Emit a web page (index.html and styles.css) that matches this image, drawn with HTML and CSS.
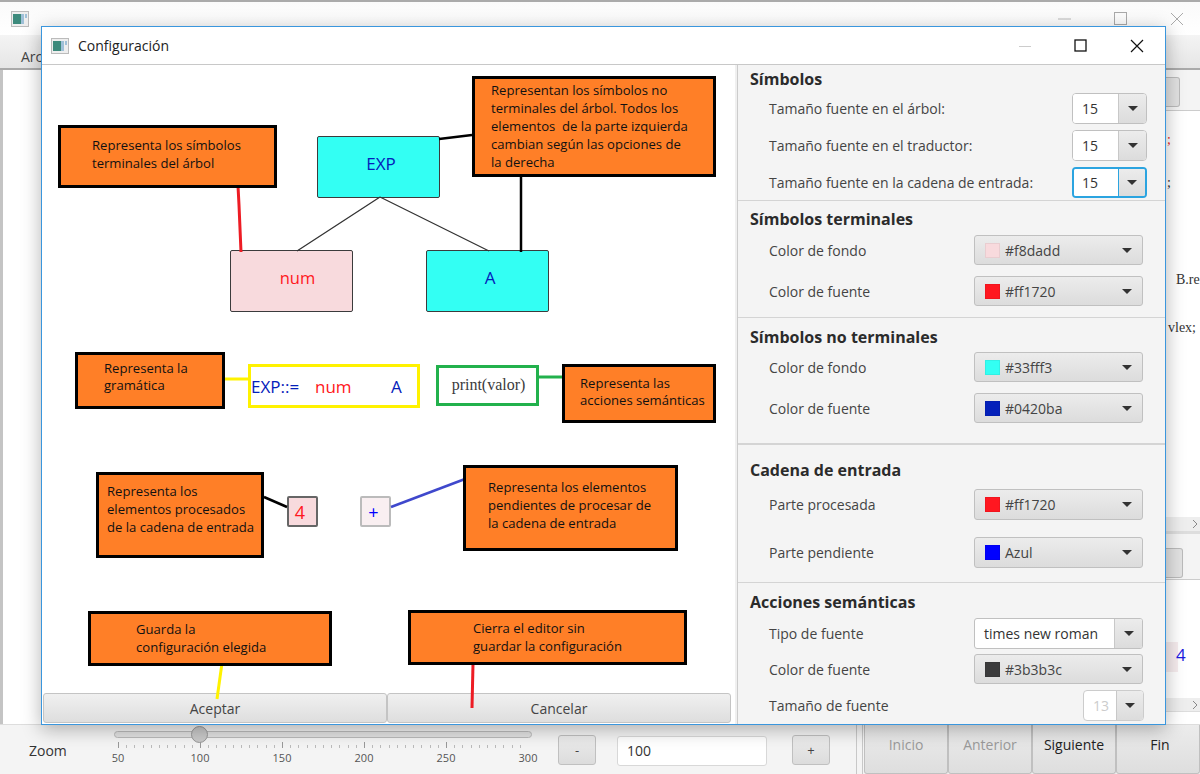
FILE: index.html
```html
<!DOCTYPE html>
<html lang="es">
<head>
<meta charset="utf-8">
<title>Configuración</title>
<link rel="stylesheet" href="styles.css">
</head>
<body>
<div class="back">
  <div class="back-title">
    <svg class="win-icon" viewBox="0 0 18 16"><rect x=".5" y=".5" width="17" height="15" fill="#eee" stroke="#bbb"/><rect x="2" y="3" width="8" height="10" fill="#3d8a7c"/><rect x="10" y="3" width="3" height="10" fill="#9fc0d8"/><rect x="14" y="3" width="2" height="4" fill="#9fc0d8"/></svg>
    <div class="back-controls">
      <svg class="bc bc-min" viewBox="0 0 14 14"><path d="M0 7h13" stroke="#bbb" fill="none"/></svg>
      <svg class="bc bc-max" viewBox="0 0 14 14"><rect x=".5" y=".5" width="12" height="12" stroke="#aaa" fill="none"/></svg>
      <svg class="bc bc-close" viewBox="0 0 14 14"><path d="M1 1l12 12M13 1L1 13" stroke="#aaa" fill="none"/></svg>
    </div>
  </div>
  <div class="back-menu"><span class="menu-item">Archivo</span></div>
  <div class="back-main">
    <div class="back-side">
      <div class="bs-tool"><span class="bs-btn"></span></div>
      <div class="bs-code">
        <span class="code-l code-1">;</span>
        <span class="code-l code-2">;</span>
        <span class="code-l code-3">B.re</span>
        <span class="code-l code-4">vlex;</span>
      </div>
      <div class="bs-scroll"><svg class="chev" viewBox="0 0 6 10"><path d="M1 1l4 4-4 4" stroke="#888" fill="none"/></svg></div>
      <div class="bs-tool2"><span class="bs-btn2"></span></div>
      <div class="bs-area"><span class="bs-pink"></span><span class="bs-four">4</span></div>
      <div class="bs-scroll bs-scroll2"><svg class="chev" viewBox="0 0 6 10"><path d="M1 1l4 4-4 4" stroke="#888" fill="none"/></svg></div>
    </div>
  </div>
  <div class="back-bottom">
    <span class="zoom-label">Zoom</span>
    <div class="slider">
      <div class="track"><span class="thumb"></span></div>
      <div class="ticks"></div>
      <div class="tick-labels"><span>50</span><span>100</span><span>150</span><span>200</span><span>250</span><span>300</span></div>
    </div>
    <button class="step step-minus">-</button>
    <div class="zoom-input">100</div>
    <button class="step step-plus">+</button>
    <div class="seps"></div>
    <div class="nav">
      <button class="nav-btn off">Inicio</button>
      <button class="nav-btn off">Anterior</button>
      <button class="nav-btn">Siguiente</button>
      <button class="nav-btn nav-last">Fin</button>
    </div>
  </div>
</div>

<div class="dialog">
  <div class="dlg-title">
    <svg class="win-icon dlg-icon" viewBox="0 0 18 16"><rect x=".5" y=".5" width="17" height="15" fill="#eee" stroke="#bbb"/><rect x="2" y="3" width="8" height="10" fill="#3d8a7c"/><rect x="10" y="3" width="3" height="10" fill="#9fc0d8"/><rect x="14" y="3" width="2" height="4" fill="#9fc0d8"/></svg>
    <span class="dlg-name">Configuración</span>
    <div class="dlg-controls">
      <svg class="dc dc-min" viewBox="0 0 14 14"><path d="M1 7.5h12" stroke="#ccc" fill="none"/></svg>
      <svg class="dc dc-max" viewBox="0 0 14 14"><rect x="1" y="1" width="11" height="11" stroke="#111" stroke-width="1.3" fill="none"/></svg>
      <svg class="dc dc-close" viewBox="0 0 14 14"><path d="M1 1l12 12M13 1L1 13" stroke="#111" stroke-width="1.2" fill="none"/></svg>
    </div>
  </div>
  <div class="dlg-body">
    <div class="canvas">
      <svg class="wires" viewBox="42 65 693 660">
        <path d="M380 197L297 251M380 197L489 251" stroke="#333" stroke-width="1.3" fill="none"/>
        <path d="M238 186L239 205L241 252" stroke="#ed1c24" stroke-width="3" fill="none"/>
        <path d="M439 139L472 135" stroke="#000" stroke-width="2.5" fill="none"/>
        <path d="M521 177V252" stroke="#000" stroke-width="2.5" fill="none"/>
        <path d="M225 379H248" stroke="#fff200" stroke-width="3" fill="none"/>
        <path d="M539 377H563" stroke="#22b14c" stroke-width="3" fill="none"/>
        <path d="M264 497L287 507" stroke="#000" stroke-width="2.5" fill="none"/>
        <path d="M391 507L465 479" stroke="#3f48cc" stroke-width="2.5" fill="none"/>
        <path d="M222 663L217 699" stroke="#fff200" stroke-width="3" fill="none"/>
        <path d="M473 664L472 708" stroke="#ed1c24" stroke-width="3" fill="none"/>
      </svg>

      <div class="callout c1">Representa los símbolos<br>terminales del árbol</div>
      <div class="callout c2">Representan los símbolos no<br>terminales del árbol. Todos los<br>elementos  de la parte izquierda<br>cambian según las opciones de<br>la derecha</div>
      <div class="callout c3">Representa la<br>gramática</div>
      <div class="callout c4">Representa las<br>acciones semánticas</div>
      <div class="callout c5">Representa los<br>elementos procesados<br>de la cadena de entrada</div>
      <div class="callout c6">Representa los elementos<br>pendientes de procesar de<br>la cadena de entrada</div>
      <div class="callout c7">Guarda la<br>configuración elegida</div>
      <div class="callout c8">Cierra el editor sin<br>guardar la configuración</div>

      <div class="node n-exp">EXP</div>
      <div class="node n-num">num</div>
      <div class="node n-a">A</div>

      <div class="grammar"><span class="g-exp">EXP::=</span><span class="g-num">num</span><span class="g-a">A</span></div>
      <div class="action">print(valor)</div>

      <div class="cell cell-done">4</div>
      <div class="cell cell-todo">+</div>

      <div class="canvas-btns">
        <button class="wide-btn">Aceptar</button>
        <button class="wide-btn">Cancelar</button>
      </div>
    </div>

    <div class="panel">
      <section class="sec sec1">
        <h2>Símbolos</h2>
        <div class="row r-spin"><span class="lbl">Tamaño fuente en el árbol:</span><div class="spin"><span class="spin-val">15</span><span class="spin-arrow"><i class="arrow"></i></span></div></div>
        <div class="row r-spin"><span class="lbl">Tamaño fuente en el traductor:</span><div class="spin"><span class="spin-val">15</span><span class="spin-arrow"><i class="arrow"></i></span></div></div>
        <div class="row r-spin"><span class="lbl">Tamaño fuente en la cadena de entrada:</span><div class="spin focus"><span class="spin-val">15</span><span class="spin-arrow"><i class="arrow"></i></span></div></div>
      </section>
      <section class="sec sec2">
        <h2>Símbolos terminales</h2>
        <div class="row"><span class="lbl">Color de fondo</span><div class="pick"><i class="sw sw-f8"></i><span>#f8dadd</span><i class="arrow"></i></div></div>
        <div class="row gap-11"><span class="lbl">Color de fuente</span><div class="pick"><i class="sw sw-red"></i><span>#ff1720</span><i class="arrow"></i></div></div>
      </section>
      <section class="sec sec3">
        <h2>Símbolos no terminales</h2>
        <div class="row"><span class="lbl">Color de fondo</span><div class="pick"><i class="sw sw-cy"></i><span>#33fff3</span><i class="arrow"></i></div></div>
        <div class="row gap-11"><span class="lbl">Color de fuente</span><div class="pick"><i class="sw sw-nv"></i><span>#0420ba</span><i class="arrow"></i></div></div>
      </section>
      <section class="sec sec4">
        <h2>Cadena de entrada</h2>
        <div class="row"><span class="lbl">Parte procesada</span><div class="pick tall"><i class="sw sw-red"></i><span>#ff1720</span><i class="arrow"></i></div></div>
        <div class="row gap-17"><span class="lbl">Parte pendiente</span><div class="pick tall"><i class="sw sw-bl"></i><span>Azul</span><i class="arrow"></i></div></div>
      </section>
      <section class="sec sec5">
        <h2>Acciones semánticas</h2>
        <div class="row"><span class="lbl">Tipo de fuente</span><div class="combo"><span class="combo-val">times new roman</span><span class="combo-arrow"><i class="arrow"></i></span></div></div>
        <div class="row"><span class="lbl">Color de fuente</span><div class="pick"><i class="sw sw-dk"></i><span>#3b3b3c</span><i class="arrow"></i></div></div>
        <div class="row"><span class="lbl">Tamaño de fuente</span><div class="spin-sm"><span class="spin-sm-val">13</span><span class="spin-arrow"><i class="arrow"></i></span></div></div>
      </section>
    </div>
  </div>
</div>
</body>
</html>
```

FILE: styles.css
```css
* { box-sizing: border-box; }
html, body { margin: 0; padding: 0; }
body {
  position: relative;
  width: 1200px;
  height: 774px;
  overflow: hidden;
  background: #fff;
  font-family: "Open Sans", "Liberation Sans", sans-serif;
  font-size: 14px;
  color: #3c3c3c;
}
button { font-family: inherit; font-size: 14px; color: #444; }

/* Window behind */
.back { width: 1200px; height: 774px; display: flex; flex-direction: column; border-top: 2px solid #aaa; }
.back-title {
  height: 33px; flex: none; display: flex; align-items: center; padding-left: 11px;
  background: linear-gradient(#fafafa, #fff);
}
.win-icon { width: 18px; height: 16px; flex: none; }
.back-controls { margin-left: auto; display: flex; align-items: center; }
.bc { width: 14px; height: 14px; display: block; }
.bc-min { margin-right: 42px; }
.bc-max { margin-right: 42px; }
.bc-close { margin-right: 16px; }
.back-menu {
  height: 35px; flex: none; padding: 12px 0 0 21px; overflow: hidden;
  background: linear-gradient(#f4f4f4, #e6e6e6);
  border-bottom: 2px solid #aaa;
}
.menu-item { font-size: 14px; color: #444; }
.back-main { flex: 1; min-height: 0; display: flex; justify-content: flex-end; border-left: 3px solid #c4c4c4; background: #fff; }
.back-side { width: 34px; display: flex; flex-direction: column; }
.bs-tool { height: 41px; flex: none; padding-top: 7px; border-bottom: 1px solid #ccc; background: #f4f4f4; }
.bs-btn { display: block; width: 14px; height: 30px; background: #e2e2e2; border: 1px solid #bbb; border-left: 0; border-radius: 0 3px 3px 0; }
.bs-code { height: 406px; flex: none; position: relative; font-family: "Liberation Serif", serif; font-size: 14px; color: #333; }
.code-l { position: absolute; line-height: 18px; }
.code-1 { left: 1px; top: 20px; color: #ed1c24; }
.code-2 { left: 1px; top: 63px; }
.code-3 { left: 10px; top: 160px; }
.code-4 { left: 2px; top: 208px; }
.bs-scroll { height: 15px; flex: none; background: #eee; display: flex; justify-content: flex-end; align-items: center; padding-right: 2px; border-bottom: 1px solid #ddd; }
.chev { width: 6px; height: 10px; }
.bs-tool2 { height: 48px; flex: none; padding-top: 14px; background: #f4f4f4; border-top: 2px solid #ddd; border-bottom: 1px solid #ccc; }
.bs-btn2 { display: block; width: 17px; height: 30px; background: #e2e2e2; border: 1px solid #bbb; border-left: 0; border-radius: 0 3px 3px 0; }
.bs-area { height: 118px; flex: none; position: relative; }
.bs-pink { position: absolute; left: 0; top: 62px; width: 12px; height: 30px; background: #f6ecee; }
.bs-four { position: absolute; left: 10px; top: 60px; width: 12px; font-size: 17px; line-height: 30px; color: #1a1ae0; }
.bs-scroll2 { height: 14px; }

.back-bottom {
  height: 50px; flex: none; display: flex; align-items: flex-start; position: relative;
  background: #f4f4f4; border-top: 1px solid #ddd;
}
.zoom-label { width: 74px; margin-left: 29px; padding-top: 16px; font-size: 14px; color: #333; }
.slider { width: 440px; padding-top: 6px; }
.track { position: relative; height: 7px; margin: 0 11px; background: #e2e2e2; border: 1px solid #bbb; border-radius: 4px; }
.thumb { position: absolute; left: 76px; top: -6px; width: 17px; height: 17px; border-radius: 50%; background: #c9c9c9; border: 1px solid #999; }
.ticks {
  height: 6px; margin: 4px 15px 0;
  background:
    repeating-linear-gradient(90deg, #999 0 1px, transparent 1px 82px),
    repeating-linear-gradient(90deg, #bbb 0 1px, transparent 1px 8.2px) 0 3px / 100% 3px no-repeat;
}
.tick-labels { display: flex; justify-content: space-between; margin-top: 3px; font-size: 11px; line-height: 14px; color: #555; }
.tick-labels span { width: 30px; text-align: center; }
.step {
  width: 38px; height: 30px; margin-top: 10px; padding: 0; flex: none;
  background: linear-gradient(#ececec, #dcdcdc); border: 1px solid #c0c0c0; border-radius: 3px; font-size: 13px;
}
.step-minus { margin-left: 15px; }
.step-plus { margin-left: 25px; }
.zoom-input {
  width: 150px; height: 30px; margin: 11px 0 0 21px; padding: 0 9px; flex: none; line-height: 28px;
  background: #fff; border: 1px solid #d8d8d8; border-radius: 3px; font-size: 14px; color: #333;
}
.seps { width: 7px; height: 50px; margin-left: 26px; flex: none; border-left: 1px solid #c8c8c8; border-right: 1px solid #c8c8c8; }
.nav { display: flex; margin-left: 1px; }
.nav-btn {
  width: 84px; height: 49px; padding: 0 0 10px; background: linear-gradient(#ececec, #dedede);
  border: 1px solid #c0c0c0; border-top: 0; border-radius: 0 0 3px 3px; color: #222;
}
.nav-btn.off { color: #9a9a9a; }
.nav-last { padding-left: 4px; }

/* Dialog */
.dialog {
  position: absolute; left: 41px; top: 26px; width: 1125px; height: 699px;
  display: flex; flex-direction: column;
  border: 1px solid #3a96dd; background: #fff;
  box-shadow: 0 4px 18px rgba(0,0,0,.3);
}
.dlg-title { height: 38px; flex: none; display: flex; align-items: center; padding-left: 9px; border-bottom: 1px solid #c8c8c8; background: #fff; }
.dlg-name { margin-left: 9px; font-size: 14px; color: #222; }
.dlg-controls { margin-left: auto; display: flex; align-items: center; }
.dc { width: 14px; height: 14px; display: block; }
.dc-min { margin-right: 42px; }
.dc-max { margin-right: 42px; }
.dc-close { margin-right: 21px; }
.dlg-body { flex: 1; min-height: 0; display: flex; }

.canvas {
  position: relative; width: 693px; flex: none;
  display: flex; flex-direction: column; justify-content: flex-end;
  padding: 0 4px 1px 1px; background: #fff;
}
.wires { position: absolute; left: 0; top: 0; width: 693px; height: 660px; z-index: 2; pointer-events: none; }
.canvas-btns { display: flex; position: relative; z-index: 1; }
.wide-btn {
  flex: 1; height: 30px; padding: 0;
  background: linear-gradient(#f0f0f0, #dedede); border: 1px solid #c4c4c4; border-radius: 3px;
}

.callout {
  position: absolute; border: 3px solid #000; background: #ff7f27; color: #111;
  font-size: 13.1px; line-height: 18px; white-space: pre; z-index: 3;
}
.c1 { left: 16px; top: 60px; width: 219px; height: 63px; padding: 8px 0 0 31px; }
.c2 { left: 430px; top: 11px; width: 244px; height: 101px; padding: 2px 0 0 16px; }
.c3 { left: 33px; top: 287px; width: 150px; height: 57px; padding: 5px 0 0 26px; line-height: 17px; }
.c4 { left: 520px; top: 299px; width: 154px; height: 59px; padding: 8px 0 0 15px; line-height: 17px; }
.c5 { left: 54px; top: 407px; width: 168px; height: 86px; padding: 7px 0 0 8px; }
.c6 { left: 421px; top: 400px; width: 215px; height: 86px; padding: 10px 0 0 22px; }
.c7 { left: 46px; top: 546px; width: 244px; height: 55px; padding: 6px 0 0 45px; }
.c8 { left: 366px; top: 545px; width: 279px; height: 55px; padding: 6px 0 0 62px; }

.node {
  position: absolute; width: 123px; height: 62px; border: 1.5px solid #3b3b3c; border-radius: 2px;
  font-size: 16px; display: flex; align-items: center; justify-content: center; padding-bottom: 8px;
}
.n-exp { left: 275px; top: 71px; background: #33fff3; color: #0420ba; font-size: 17px; padding-left: 5px; }
.n-num { left: 188px; top: 185px; background: #f8dadd; color: #ff1720; padding-left: 12px; font-size: 16.5px; }
.n-a { left: 384px; top: 185px; background: #33fff3; color: #0420ba; padding-left: 5px; font-size: 17px; }

.grammar {
  position: absolute; left: 206px; top: 299px; width: 172px; height: 44px;
  border: 3px solid #fff200; display: flex; align-items: center; font-size: 17px; background: #fff; z-index: 1;
}
.g-exp { color: #0420ba; width: 64px; }
.g-num { color: #ff1720; width: 76px; }
.g-a { color: #0420ba; }
.action {
  position: absolute; left: 394px; top: 300px; width: 103px; height: 41px; padding: 0 0 2px 2px;
  border: 3px solid #22b14c; display: flex; align-items: center; justify-content: center;
  font-family: "Liberation Serif", serif; font-size: 16px; color: #3b3b3c; background: #fff;
}
.cell {
  position: absolute; top: 431px; width: 31px; height: 31px; border-radius: 2px;
  display: flex; align-items: center; justify-content: center;
}
.cell-done { left: 245px; background: #f8dadd; border: 2px solid #666; color: #ff1720; font-size: 18px; padding-right: 5px; }
.cell-todo { left: 318px; background: #f9eff1; border: 2px solid #bbb; color: #0000ff; font-size: 18px; padding-right: 4px; }

/* Panel */
.panel {
  flex: 1; min-width: 0; background: #f4f4f4;
  border-left: 1px solid #ccc; margin-left: 2px; box-shadow: -3px 0 0 #f0f0f0;
  overflow: hidden;
}
.sec { display: flex; flex-direction: column; border-bottom: 1px solid #d4d4d4; }
.sec5 { border-bottom: 0; }
.sec h2 { margin: 0 0 0 12px; height: 20px; font-size: 16px; line-height: 20px; font-weight: 700; color: #2b2b2b; }
.sec1 { height: 136px; padding-top: 4px; }
.sec2 { height: 117px; padding-top: 8px; }
.sec3 { height: 127px; padding-top: 9px; border-bottom-width: 2px; }
.sec4 { height: 138px; padding-top: 15px; }
.sec5 { padding-top: 9px; }
.sec h2 + .row { margin-top: 6px; }
.sec1 h2 + .row { margin-top: 4px; }
.sec3 h2 + .row { margin-top: 5px; }
.sec4 h2 + .row { margin-top: 9px; }
.row { display: flex; align-items: center; justify-content: space-between; margin-top: 5px; padding: 0 22px 0 31px; }
.r-spin { margin-top: 6px; padding-right: 18px; }
.sec .gap-11 { margin-top: 11px; }
.sec .gap-17 { margin-top: 17px; }
.lbl { font-size: 14px; color: #444; white-space: nowrap; }

.spin { width: 75px; height: 31px; display: flex; border: 1px solid #c0c0c0; border-radius: 4px; background: #fff; overflow: hidden; }
.spin-val { width: 45px; padding-left: 9px; line-height: 29px; background: #fff; color: #333; }
.spin-arrow { flex: 1; display: flex; align-items: center; justify-content: center; background: linear-gradient(#ececec, #dcdcdc); border-left: 1px solid #c8c8c8; }
.spin.focus { border: 2px solid #2ba4e0; }
.spin.focus .spin-val { width: 44px; padding-left: 8px; line-height: 27px; }
.spin.focus .spin-arrow { border-left-color: #2ba4e0; }
.arrow { display: block; width: 0; height: 0; border: 5px solid transparent; border-top: 5px solid #333; border-bottom: 0; }

.pick {
  width: 169px; height: 30px; display: flex; align-items: center; padding: 0 10px;
  background: linear-gradient(#ececec, #dcdcdc); border: 1px solid #c0c0c0; border-radius: 3px; color: #444;
}
.pick.tall { height: 31px; }
.pick span { flex: 1; margin-left: 5px; }
.sw { width: 15px; height: 15px; flex: none; border: 1px solid rgba(0,0,0,.06); }
.sw-f8 { background: #f8dadd; }
.sw-red { background: #ff1720; }
.sw-cy { background: #33fff3; }
.sw-nv { background: #0420ba; }
.sw-bl { background: #0000ff; }
.sw-dk { background: #3b3b3c; }

.combo { width: 169px; height: 31px; display: flex; border: 1px solid #c0c0c0; border-radius: 3px; overflow: hidden; background: #fff; }
.combo-val { width: 139px; padding-left: 9px; line-height: 29px; color: #333; white-space: nowrap; }
.combo-arrow { flex: 1; display: flex; align-items: center; justify-content: center; background: linear-gradient(#ececec, #dcdcdc); border-left: 1px solid #c8c8c8; }
.sec5 .row:last-child { padding-right: 21px; margin-top: 6px; }
.spin-sm { width: 61px; height: 31px; display: flex; border: 1px solid #ccc; border-radius: 4px; background: #fff; overflow: hidden; }
.spin-sm-val { width: 32px; padding-left: 9px; line-height: 29px; color: #ccc; }
```
